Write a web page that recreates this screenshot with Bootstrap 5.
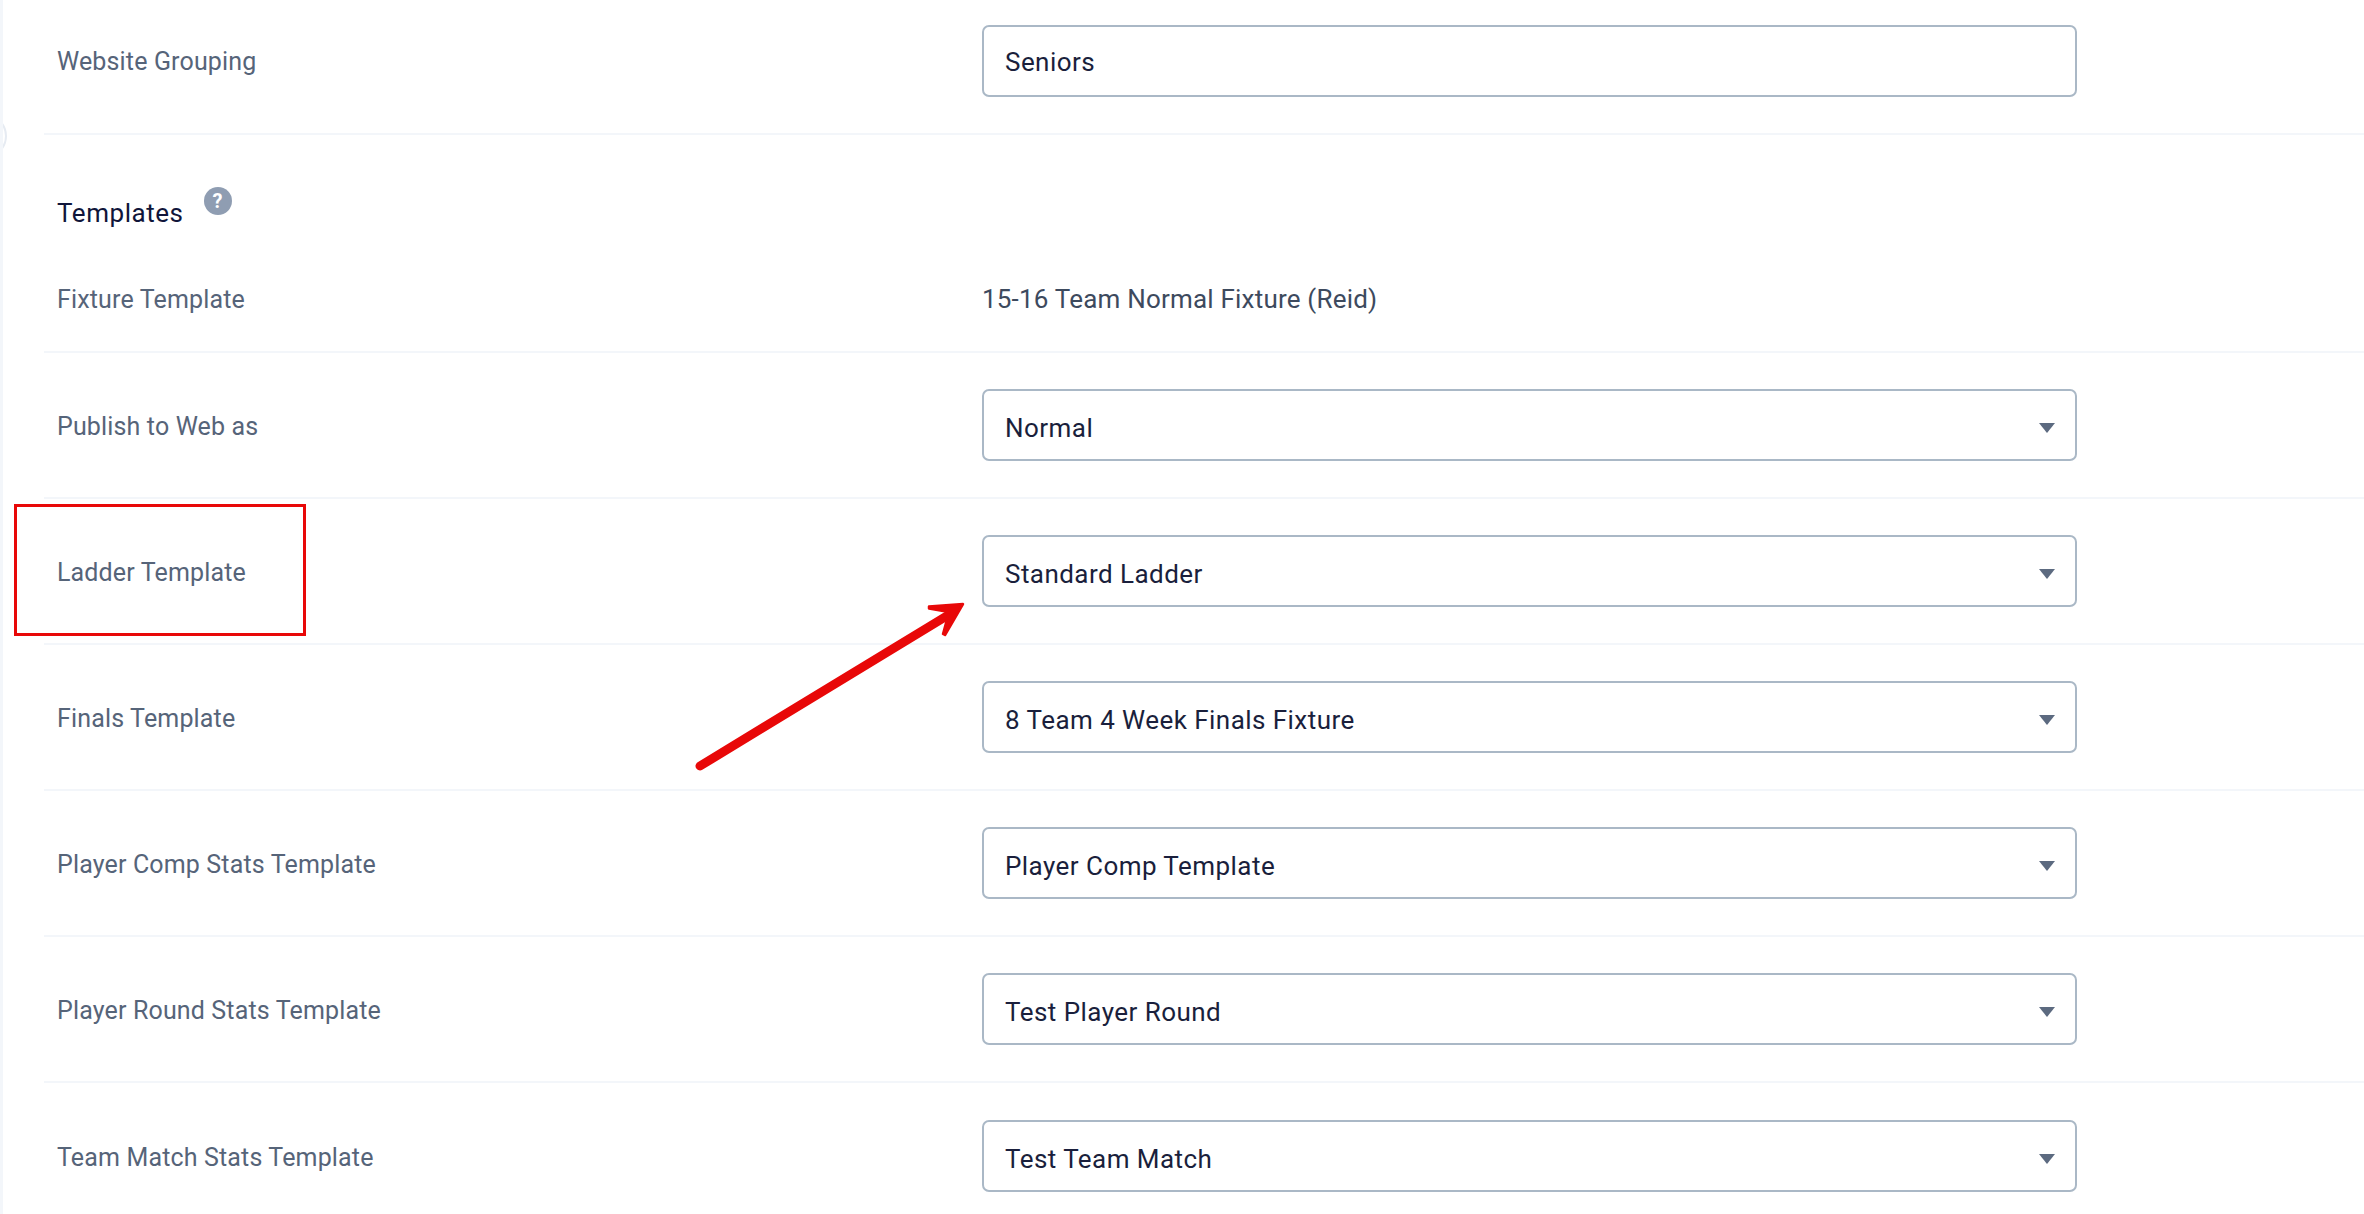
<!DOCTYPE html>
<html lang="en">
<head>
<meta charset="utf-8">
<title>Templates</title>
<link href="https://cdn.jsdelivr.net/npm/bootstrap@5.3.0/dist/css/bootstrap.min.css" rel="stylesheet">
<style>
html, body { height: 100%; }
body { background: #fff; font-family: Roboto, "Liberation Sans", sans-serif; overflow: hidden; }
.page-shell { position: relative; height: 1214px; padding-left: 41px; overflow: hidden; border-left: 3px solid #f3f6fa; }
.side-toggle { position: absolute; left: -40px; top: 114px; width: 44px; height: 44px; border-radius: 50%; background: #fff; border: 2px solid #e6ebf2; }
.set-row { display: flex; align-items: center; border-bottom: 2px solid #f3f6fa; padding-left: 13px; }
.lbl-cell { width: 925px; flex: none; font-size: 25px; font-weight: 400; letter-spacing: .15px; color: #566479; line-height: 1; padding-top: 2px; }
.val-cell { width: 1095px; flex: none; }
.h-input, .h-select { height: 72px; font-size: 26px; letter-spacing: .45px; color: #1a1f3c; border: 2px solid #aab8c6; border-radius: 7px; padding: 0 21px; font-family: inherit; box-shadow: none; }
.h-input { padding-top: 2px; }
.h-select { padding-top: 7px; background-image: url("data:image/svg+xml,%3Csvg xmlns='http://www.w3.org/2000/svg' viewBox='0 0 16 10'%3E%3Cpath fill='%235c6a80' d='M0 0h16L8 10z'/%3E%3C/svg%3E"); background-size: 16px 10px; background-position: right 20px top 32px; background-repeat: no-repeat; }
.val-text { font-size: 26px; letter-spacing: .2px; color: #3d4a5e; line-height: 1; padding-top: 2px; }
.rh-1 { height: 135px; padding-bottom: 12px; }
.rh-head { height: 218px; align-items: flex-start; flex-wrap: wrap; }
.rh-n { height: 146px; }
.rh-last { height: 146px; border-bottom: 0; }
.sec-head { font-size: 26px; font-weight: 400; letter-spacing: .55px; color: #10153a; line-height: 1; margin-top: -2px; }
.help-dot { width: 28px; height: 28px; flex: none; border-radius: 50%; background: #8f9db2; color: #fff; font-size: 20px; font-weight: 700; line-height: 28px; text-align: center; margin-left: 20px; margin-top: -27px; }
.sec-line { height: 110px; padding-top: 48px; width: 100%; align-items: center; }
.fix-line { height: 106px; width: 100%; align-items: center; }
.note-box { position: absolute; left: 11px; top: 504px; width: 292px; height: 132px; border: 3px solid #e80808; pointer-events: none; }
.note-arrow { position: absolute; left: -3px; top: 0; width: 2364px; height: 1214px; pointer-events: none; }
</style>
</head>
<body>
<div class="page-shell">
  <div class="side-toggle"></div>

  <div class="set-row rh-1">
    <div class="lbl-cell">Website Grouping</div>
    <div class="val-cell"><input class="form-control h-input" type="text" value="Seniors"></div>
  </div>

  <div class="set-row rh-head">
    <div class="d-flex sec-line">
      <span class="sec-head">Templates</span>
      <span class="help-dot">?</span>
    </div>
    <div class="d-flex fix-line">
      <div class="lbl-cell">Fixture Template</div>
      <div class="val-cell val-text">15-16 Team Normal Fixture (Reid)</div>
    </div>
  </div>

  <div class="set-row rh-n">
    <div class="lbl-cell">Publish to Web as</div>
    <div class="val-cell"><select class="form-select h-select"><option>Normal</option></select></div>
  </div>
  <div class="set-row rh-n">
    <div class="lbl-cell">Ladder Template</div>
    <div class="val-cell"><select class="form-select h-select"><option>Standard Ladder</option></select></div>
  </div>
  <div class="set-row rh-n">
    <div class="lbl-cell">Finals Template</div>
    <div class="val-cell"><select class="form-select h-select"><option>8 Team 4 Week Finals Fixture</option></select></div>
  </div>
  <div class="set-row rh-n">
    <div class="lbl-cell">Player Comp Stats Template</div>
    <div class="val-cell"><select class="form-select h-select"><option>Player Comp Template</option></select></div>
  </div>
  <div class="set-row rh-n">
    <div class="lbl-cell">Player Round Stats Template</div>
    <div class="val-cell"><select class="form-select h-select"><option>Test Player Round</option></select></div>
  </div>
  <div class="set-row rh-last">
    <div class="lbl-cell">Team Match Stats Template</div>
    <div class="val-cell"><select class="form-select h-select"><option>Test Team Match</option></select></div>
  </div>

  <div class="note-box"></div>
  <svg class="note-arrow" viewBox="0 0 2364 1214" aria-hidden="true">
    <path d="M700 766 L950 614" fill="none" stroke="#e80808" stroke-width="9" stroke-linecap="round"/>
    <path d="M963 604 L929 606.5 L929 608.5 L949 612 L943 634 L945 635 Z" fill="#e80808" stroke="#e80808" stroke-width="2.5" stroke-linejoin="round"/>
  </svg>
</div>
<script src="https://cdn.jsdelivr.net/npm/bootstrap@5.3.0/dist/js/bootstrap.bundle.min.js"></script>
</body>
</html>
